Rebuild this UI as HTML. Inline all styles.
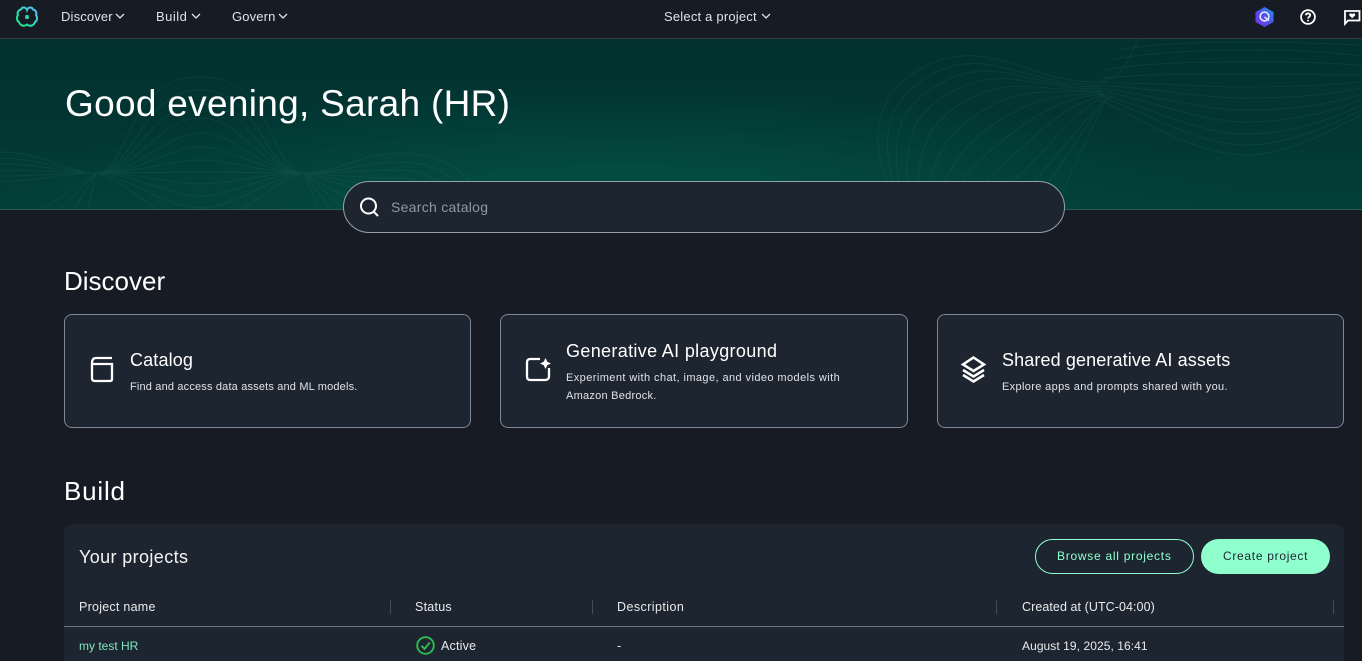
<!DOCTYPE html>
<html><head><meta charset="utf-8"><style>
*{box-sizing:border-box}
html,body{margin:0;padding:0;width:1362px;height:661px;overflow:hidden;background:#161b24;font-family:"Liberation Sans",sans-serif;color:#fff}
.t{position:absolute;white-space:nowrap;line-height:1}
.card{position:absolute;top:314px;height:114px;background:#1d2530;border:1px solid #7d8998;border-radius:8px}
.sep{position:absolute;top:600px;width:1px;height:14px;background:#414d5c}
svg{position:absolute;overflow:visible}
</style></head><body>
<div style="position:absolute;left:0;top:0;width:1362px;height:39px;background:#161b24;border-bottom:1px solid #343b47"></div>
<svg style="left:15px;top:5px" width="24" height="24" viewBox="0 0 24 24" fill="none" stroke-width="2"><defs><linearGradient id="g" x1="0" y1="1" x2="1" y2="0"><stop offset="0" stop-color="#16e878"/><stop offset=".5" stop-color="#35d6c0"/><stop offset="1" stop-color="#5cb8ff"/></linearGradient></defs><path stroke="url(#g)" d="M12 5C11 2 7 1.500 6 4.500C3 5 2 8 3 10C1.500 12 1.500 16 4 17C5 20.500 9 22 12 19.500C15 22 19 20.500 20 17C22.500 16 22.500 12 21 10C22 8 21 5 18 4.500C17 1.500 13 2 12 5Z"/><path stroke="url(#g)" stroke-width="1.300" d="M12 5V19.500"/><rect x="10.200" y="10" width="3.600" height="4" rx="1" fill="#2fd8a0"/></svg>
<div class="t" style="left:61px;top:10px;font-size:13px;letter-spacing:.15px;color:#dfe3e8">Discover</div>
<svg style="left:115px;top:13px" width="10" height="7" fill="none" stroke="#dfe3e8" stroke-width="1.300"><path d="M1 1L5 5L9 1"/></svg>
<div class="t" style="left:156px;top:10px;font-size:13px;letter-spacing:.5px;color:#dfe3e8">Build</div>
<svg style="left:191px;top:13px" width="10" height="7" fill="none" stroke="#dfe3e8" stroke-width="1.300"><path d="M1 1L5 5L9 1"/></svg>
<div class="t" style="left:232px;top:10px;font-size:13px;letter-spacing:.15px;color:#dfe3e8">Govern</div>
<svg style="left:278px;top:13px" width="10" height="7" fill="none" stroke="#dfe3e8" stroke-width="1.300"><path d="M1 1L5 5L9 1"/></svg>
<div class="t" style="left:664px;top:10px;font-size:13px;letter-spacing:.2px;color:#dfe3e8">Select a project</div>
<svg style="left:761px;top:13px" width="10" height="7" fill="none" stroke="#dfe3e8" stroke-width="1.300"><path d="M1 1L5 5L9 1"/></svg>
<svg style="left:1254px;top:6px" width="21" height="22" viewBox="0 0 21 22"><defs><linearGradient id="h" x1="0" y1="1" x2="1" y2="0"><stop offset="0" stop-color="#7a2ff0"/><stop offset=".55" stop-color="#4a55e8"/><stop offset="1" stop-color="#1e9cf0"/></linearGradient></defs><path fill="url(#h)" d="M10.500 1L19.500 6V16L10.500 21L1.500 16V6Z"/><circle cx="10.500" cy="10.500" r="4.400" fill="none" stroke="#e8e6ff" stroke-width="1.600"/><path d="M10.500 11L15 14.500" fill="none" stroke="#e8e6ff" stroke-width="1.500"/></svg>
<svg style="left:1300px;top:9px" width="16" height="16" fill="none" stroke="#fff" stroke-width="1.800"><circle cx="8" cy="8" r="6.900"/><path d="M5.800 6.300C5.800 3.800 10.200 3.800 10.200 6.300C10.200 8 8 7.800 8 9.500"/><path d="M8 10.800V12.300"/></svg>
<svg style="left:1344px;top:10px" width="16" height="15" viewBox="0 0 16 15"><path d="M1 1H15.500V10.500H4L1 13.800Z" fill="none" stroke="#fff" stroke-width="1.800"/><path d="M8.200 8.300L5.300 5.400C4.700 3.500 7 2.700 8.200 4.200C9.400 2.700 11.700 3.500 11.100 5.400Z" fill="#fff"/></svg>

<div style="position:absolute;left:0;top:39px;width:1362px;height:171px;border-bottom:1px solid #2b5a55;background:radial-gradient(ellipse 620px 130px at 620px 175px,#034c41 0%,#034a40 35%,rgba(3,68,60,.55) 70%,rgba(3,60,56,0) 100%),linear-gradient(180deg,#02312f 0%,#023532 45%,#033f39 100%);overflow:hidden">
<svg style="left:0;top:-39px" width="1362" height="210" fill="none" stroke="#4f9a8d" stroke-width=".8" opacity=".13">
<path d="M905 225C880 170 870 140 885 105C900 70 950 50 985 57C1030 65 1050 82 1095 82"/>
<path d="M908 225C888 175 880 140 895 110C915 75 955 58 990 65C1030 72 1055 85 1098 85"/>
<path d="M911 225C896 180 890 145 905 115C925 85 965 66 1000 72C1035 78 1060 87 1100 87"/>
<path d="M914 225C905 185 903 150 917 122C935 95 975 76 1010 79C1040 82 1065 89 1100 89"/>
<path d="M918 225C915 190 918 155 932 130C950 105 985 86 1020 86C1045 87 1070 91 1100 91"/>
<path d="M922 225C926 195 932 160 950 138C970 115 1000 97 1030 93C1055 91 1075 92 1102 92"/>
<path d="M928 225C938 195 950 165 968 146C985 128 1015 108 1045 99C1065 95 1080 94 1103 93"/>
<path d="M935 225C950 200 965 172 985 155C1005 138 1030 118 1055 106C1075 98 1085 96 1104 94"/>
<path d="M945 225C965 205 985 180 1005 163C1025 145 1045 125 1065 112C1080 103 1090 98 1105 95"/>
<path d="M960 225C985 208 1005 188 1025 170C1040 155 1060 132 1075 118C1085 108 1095 100 1106 96"/>
<path d="M980 225C1005 210 1025 192 1040 175C1055 158 1070 138 1085 122C1092 112 1100 104 1108 97"/>
<path d="M1005 225C1025 210 1040 195 1050 180C1065 160 1080 135 1092 118C1098 110 1105 102 1110 98"/>
<path d="M1040 225C1055 205 1065 190 1072 170C1085 145 1097 118 1105 100"/>
<path d="M1095 82C1120 82 1130 60 1138 39"/>
<path d="M1100 100C1150 125 1200 155 1245 155C1290 155 1330 130 1362 115"/>
<path d="M1098 95C1150 115 1200 145 1245 145C1290 145 1330 125 1362 110"/>
<path d="M1098 93C1150 108 1200 134 1245 134C1290 134 1330 120 1362 105"/>
<path d="M1098 90C1150 100 1200 122 1245 122C1290 122 1330 112 1362 100"/>
<path d="M1098 88C1150 94 1200 110 1245 110C1290 110 1330 105 1362 94"/>
<path d="M1098 85C1150 88 1200 98 1245 98C1290 98 1330 95 1362 88"/>
<path d="M1098 83C1150 82 1200 87 1245 87C1290 87 1330 85 1362 82"/>
<path d="M1100 78C1150 74 1200 74 1245 74C1290 74 1330 75 1362 75"/>
<path d="M1104 70C1150 62 1200 62 1250 62C1290 62 1330 62 1362 66"/>
<path d="M1110 60C1150 52 1200 50 1250 50C1300 50 1330 52 1362 56"/>
<path d="M1118 50C1150 44 1200 42 1250 42C1300 42 1330 44 1362 45"/>
<path d="M0 152C40 152 70 173 96 173C130 173 125 77 200 77C275 77 270 173 304 173"/>
<path d="M0 158C40 158 70 173 96 173C135 173 140 90 200 90C262 90 262 173 304 173"/>
<path d="M0 164C40 164 70 173 96 173C135 173 150 104 200 104C252 104 262 173 304 173"/>
<path d="M0 170C40 170 70 173 96 173C135 173 160 118 200 118C242 118 262 173 304 173"/>
<path d="M0 176C40 176 70 173 96 173C140 173 165 133 200 133C236 133 262 173 304 173"/>
<path d="M0 182C40 180 70 173 96 173C140 173 170 147 200 147C232 147 262 173 304 173"/>
<path d="M96 173C140 173 170 160 200 160C232 160 262 173 304 173"/>
<path d="M96 173C140 173 170 172 200 172C232 172 262 173 304 173"/>
<path d="M96 173C140 173 170 184 200 184C232 184 262 173 304 173"/>
<path d="M96 173C140 175 170 196 200 196C232 196 262 175 304 173"/>
<path d="M96 173C135 178 165 208 200 208C236 208 265 178 304 173"/>
<path d="M96 173C130 180 160 225 200 225C240 225 270 180 304 173"/>
<path d="M304 173C340 173 360 153 400 153C445 153 490 180 482 225"/>
<path d="M304 173C340 173 365 162 400 162C440 162 476 185 470 225"/>
<path d="M304 173C340 173 365 170 400 170C430 170 462 190 458 225"/>
<path d="M304 173C340 176 370 178 400 178C425 178 448 195 444 225"/>
<path d="M304 173C340 180 375 186 400 187C418 188 434 200 430 225"/>
<path d="M304 173C340 184 375 195 395 198C408 202 416 212 415 225"/>
<path d="M304 173C330 190 365 205 385 225"/>
<path d="M304 173C325 190 345 210 360 225"/><path d="M304 173C318 190 330 210 340 225"/>
<path d="M304 173C312 190 318 210 322 225"/>
<path d="M96 173C75 190 40 210 15 225"/><path d="M96 173C78 192 60 210 40 225"/>
<path d="M96 173C85 192 75 210 62 225"/><path d="M96 173C92 192 88 210 84 225"/>
</svg>
</div>

<div class="t" style="left:65px;top:85px;font-size:37px;color:#fff;letter-spacing:.3px">Good evening, Sarah (HR)</div>

<div style="position:absolute;left:343px;top:181px;width:722px;height:52px;background:#1d2530;border:1px solid #95a1ab;border-radius:26px"></div>
<svg style="left:359px;top:197px" width="20" height="20" fill="none" stroke="#fff" stroke-width="2"><circle cx="9.500" cy="9" r="7.500"/><path d="M14.500 14.500L19 19"/></svg>
<div class="t" style="left:391px;top:200px;font-size:14px;letter-spacing:.28px;color:#8d99a8">Search catalog</div>

<div class="t" style="left:64px;top:268px;font-size:26px;color:#fff;letter-spacing:0">Discover</div>

<div class="card" style="left:64px;width:407px"></div>
<div class="card" style="left:500px;width:408px"></div>
<div class="card" style="left:937px;width:407px"></div>

<svg style="left:90px;top:356px" width="24" height="27" fill="none" stroke="#fff" stroke-width="2.300"><path d="M22 2H6C3 2 2 4 2 7V22C2 24 3 25 5 25H20C21.500 25 22 24 22 23V8H3"/></svg>
<div class="t" style="left:130px;top:351px;font-size:18px;letter-spacing:.15px;color:#fff">Catalog</div>
<div class="t" style="left:130px;top:382px;font-size:11px;letter-spacing:.17px;color:#dfe3e8">Find and access data assets and ML models.</div>

<svg style="left:525px;top:357px" width="27" height="25" viewBox="0 0 27 25"><path d="M15 2H5.500C3 2 2 3 2 5.500V19.500C2 22 3 23 5.500 23H20C22 23 24 22 24 19.500V11" fill="none" stroke="#fff" stroke-width="2.300"/><path d="M20.500 1L22.300 4.700L26 6.500L22.300 8.300L20.500 12L18.700 8.300L15 6.500L18.700 4.700Z" fill="#fff"/></svg>
<div class="t" style="left:566px;top:342px;font-size:18px;letter-spacing:.34px;color:#fff">Generative AI playground</div>
<div class="t" style="left:566px;top:373px;font-size:11px;letter-spacing:.42px;color:#dfe3e8">Experiment with chat, image, and video models with</div>
<div class="t" style="left:566px;top:391px;font-size:11px;letter-spacing:.25px;color:#dfe3e8">Amazon Bedrock.</div>

<svg style="left:961px;top:356px" width="25" height="27" fill="none" stroke="#fff" stroke-width="2.500"><path d="M12.500 1.500L23 8.500L12.500 15L2 8.500Z"/><path d="M2 14L12.500 20.500L23 14"/><path d="M2 19L12.500 25.500L23 19"/></svg>
<div class="t" style="left:1002px;top:351px;font-size:18px;letter-spacing:.12px;color:#fff">Shared generative AI assets</div>
<div class="t" style="left:1002px;top:382px;font-size:11px;letter-spacing:.35px;color:#dfe3e8">Explore apps and prompts shared with you.</div>

<div class="t" style="left:64px;top:478px;font-size:26px;color:#fff;letter-spacing:.8px">Build</div>

<div style="position:absolute;left:64px;top:524px;width:1280px;height:137px;background:#1d2530;border-radius:8px 8px 0 0"></div>
<div class="t" style="left:79px;top:548px;font-size:18px;letter-spacing:.38px;color:#f4f4f4">Your projects</div>
<div style="position:absolute;left:1035px;top:539px;width:159px;height:35px;border:1px solid #8fffce;border-radius:18px"></div>
<div class="t" style="left:1057px;top:550px;font-size:12px;letter-spacing:.73px;color:#8fffce">Browse all projects</div>
<div style="position:absolute;left:1201px;top:539px;width:129px;height:35px;background:#8fffce;border-radius:18px"></div>
<div class="t" style="left:1223px;top:550px;font-size:12px;letter-spacing:.7px;color:#1d2530">Create project</div>

<div class="t" style="left:79px;top:601px;font-size:12.500px;letter-spacing:.25px;color:#e9ebed">Project name</div>
<div class="sep" style="left:390px"></div>
<div class="t" style="left:415px;top:601px;font-size:12.500px;letter-spacing:.25px;color:#e9ebed">Status</div>
<div class="sep" style="left:592px"></div>
<div class="t" style="left:617px;top:601px;font-size:12.500px;letter-spacing:.43px;color:#e9ebed">Description</div>
<div class="sep" style="left:996px"></div>
<div class="t" style="left:1022px;top:601px;font-size:12.500px;letter-spacing:.07px;color:#e9ebed">Created at (UTC-04:00)</div>
<div class="sep" style="left:1333px"></div>
<div style="position:absolute;left:64px;top:626px;width:1280px;height:1px;background:#6e7682"></div>

<div class="t" style="left:79px;top:640px;font-size:12px;letter-spacing:0;color:#7fe8bd">my test HR</div>
<svg style="left:416px;top:636px" width="19" height="19" fill="none" stroke="#2ebd4e" stroke-width="1.900"><circle cx="9.500" cy="9.500" r="8.300"/><path d="M5.500 9.800L8.500 12.800L13.800 6.500"/></svg>
<div class="t" style="left:441px;top:640px;font-size:12.500px;letter-spacing:.2px;color:#e9ebed">Active</div>
<div class="t" style="left:617px;top:640px;font-size:12.500px;color:#e9ebed">-</div>
<div class="t" style="left:1022px;top:640px;font-size:12px;letter-spacing:.07px;color:#e9ebed">August 19, 2025, 16:41</div>
</body></html>
